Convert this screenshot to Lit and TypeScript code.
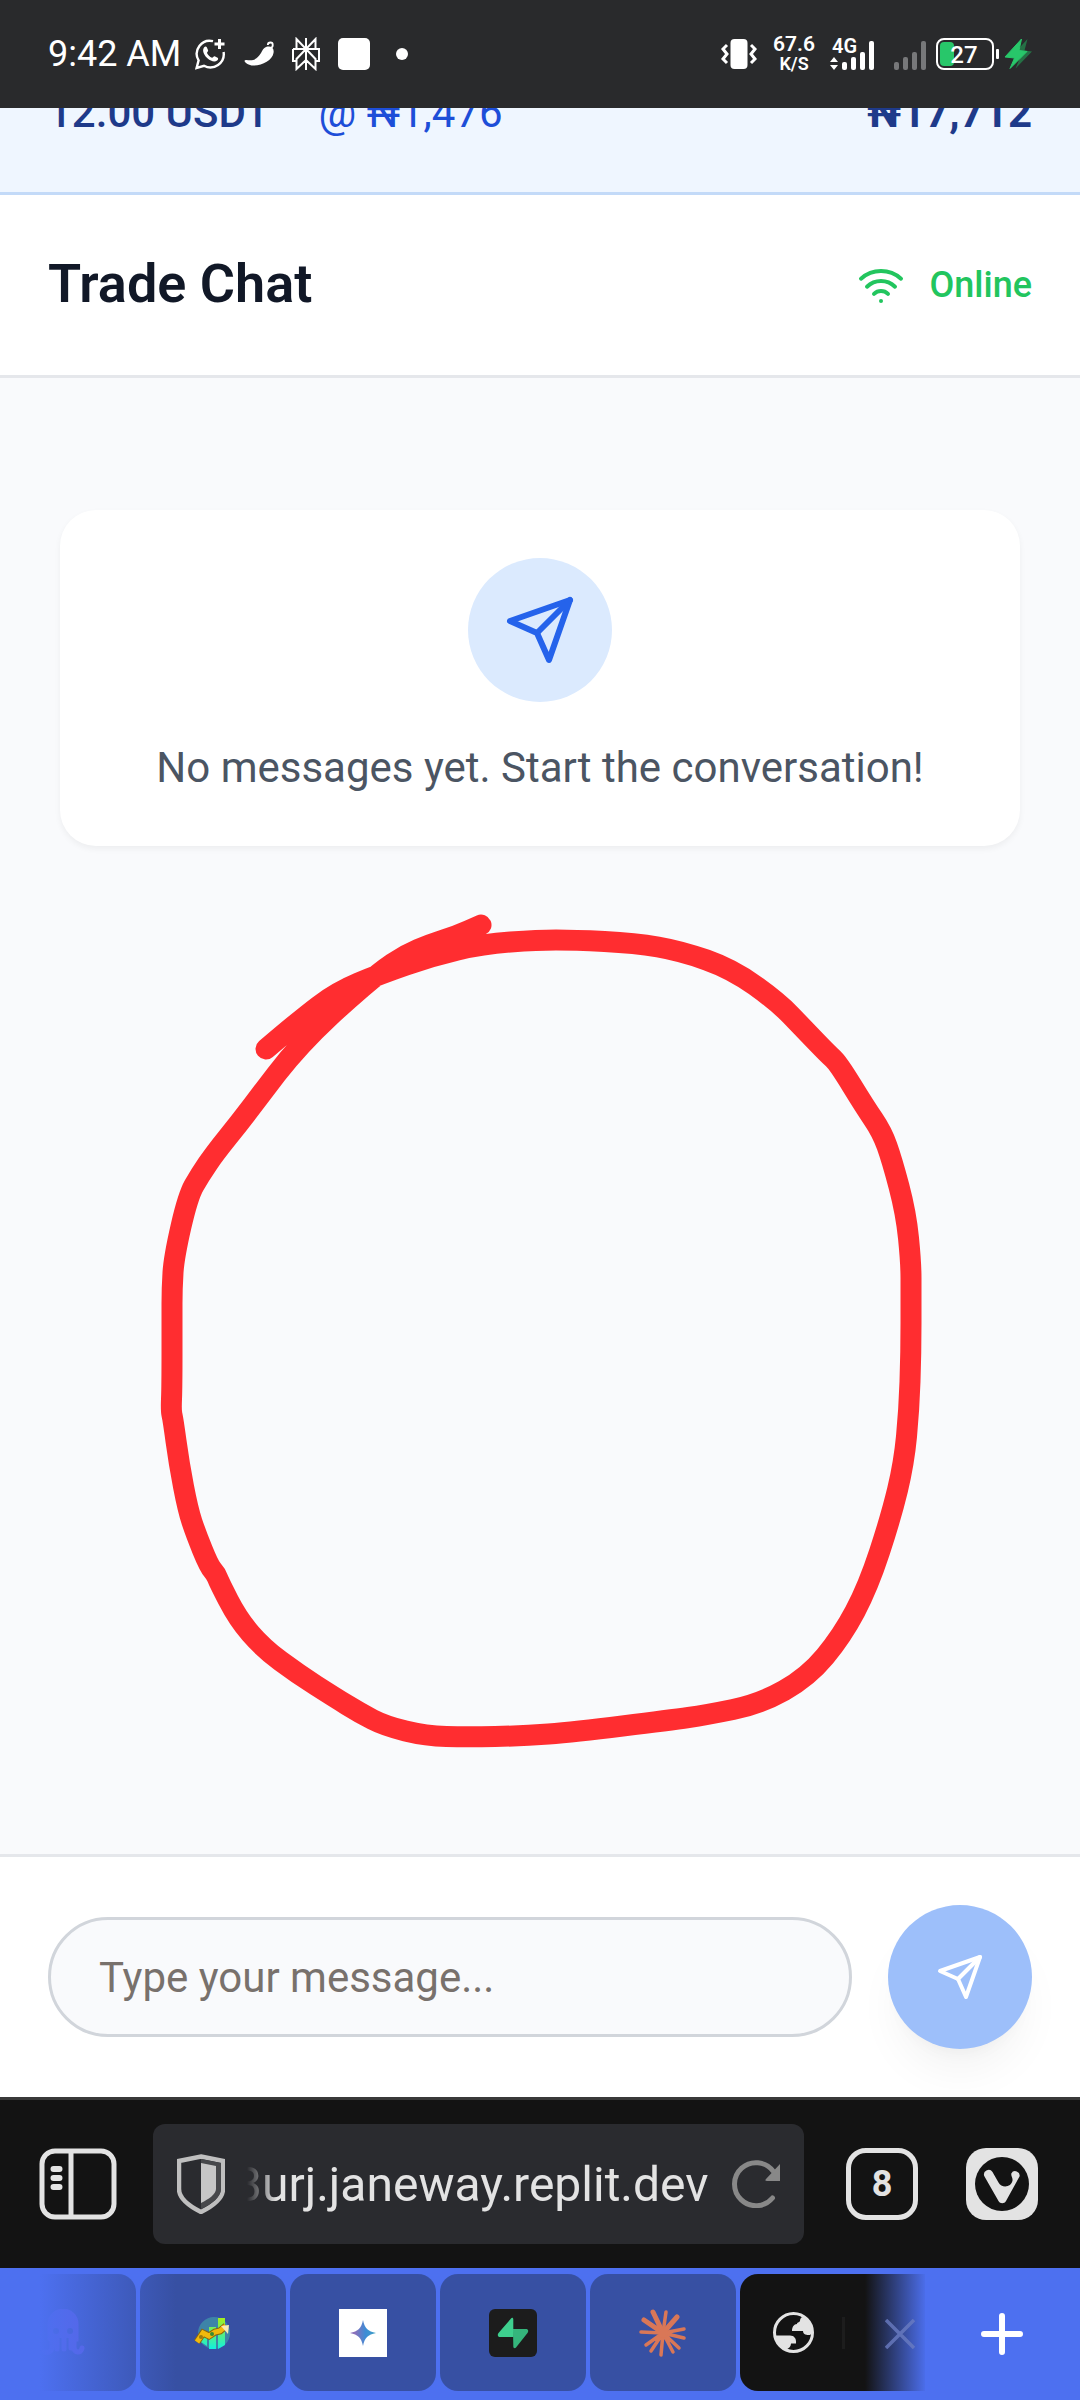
import { LitElement, html, css, svg } from "lit";
import { customElement, state } from "lit/decorators.js";

type Point = [number, number];

const STROKE: Point[] = [
  [266, 1049], [300, 1020], [337, 992], [380, 974], [432, 956], [483, 944], [538, 940], [574, 940],
  [635, 943], [681, 951], [732, 969], [778, 1002], [803, 1028], [828, 1054], [838, 1063], [865, 1107],
  [882, 1132], [892, 1160], [906, 1213], [911, 1263], [911, 1293], [911, 1353], [909, 1410], [904, 1463],
  [891, 1517], [868, 1587], [842, 1636], [808, 1677], [760, 1704], [706, 1715], [671, 1720], [574, 1732],
  [523, 1736], [467, 1737], [426, 1736], [385, 1726], [360, 1713], [334, 1697], [298, 1674], [263, 1648],
  [238, 1619], [219, 1582], [216, 1574], [209, 1566], [196, 1534], [188, 1510], [179, 1463], [173, 1419], [171, 1411],
  [172, 1387], [172, 1320], [172, 1288], [174, 1257], [188, 1196], [200, 1175], [215, 1153], [240, 1122],
  [265, 1089], [288, 1059], [315, 1030], [344, 1003], [380, 972], [405, 955], [431, 944], [456, 936], [481, 925],
];

/** Joins the points with a curve that runs through the middle of each segment. */
function smoothPath(points: Point[]): string {
  const mid = (a: Point, b: Point) => `${(a[0] + b[0]) / 2} ${(a[1] + b[1]) / 2}`;
  let d = `M${points[0].join(" ")}`;
  for (let i = 1; i < points.length - 1; i++) {
    d += `Q${points[i].join(" ")} ${mid(points[i], points[i + 1])}`;
  }
  return d + `L${points[points.length - 1].join(" ")}`;
}

const sendIcon = html`<svg class="icon" viewBox="0 0 24 24" aria-hidden="true">
  <path d="m22 2-7 20-4-9-9-4Z" /><path d="M22 2 11 13" />
</svg>`;

@customElement("status-bar")
export class StatusBar extends LitElement {
  static styles = css`
    :host {
      display: flex;
      align-items: center;
      justify-content: space-between;
      height: 108px;
      padding: 0 48px;
      box-sizing: border-box;
      background: #292a2c;
      color: #fff;
      position: relative;
      z-index: 1;
    }
    .group { display: flex; align-items: center; }
    .icons { gap: 18px; margin-left: 13px; }
    .time { font-size: 36px; line-height: 42px; }
    .speed { display: flex; flex-direction: column; align-items: center; font-size: 21px; line-height: 19px; font-weight: 600; margin: 0 13px 0 15px; }
    .speed .unit { font-size: 18px; }
    .battery { margin-left: 8px; }
    svg { display: block; }
  `;

  render() {
    const bars = (fill: string) => svg`
      <g fill=${fill}>
        <rect x="12" y="26" width="5" height="8" rx="2" />
        <rect x="21" y="21" width="5" height="13" rx="2" />
        <rect x="30" y="16" width="5" height="18" rx="2" />
        <rect x="39" y="5" width="5" height="29" rx="2" />
      </g>`;
    return html`
      <div class="group">
        <span class="time">9:42 AM</span>
        <div class="group icons">
          <svg width="32" height="32" viewBox="0 0 32 32" fill="none" stroke="#fff" stroke-width="2.4">
            <path d="M19 3.2A13 13 0 0 0 4.600 22.400L2.600 30l7.400-2.200A13.400 13.400 0 0 0 29.600 14" />
            <path d="M25.500 1v10M20.500 6h10" stroke-width="3" />
            <path d="M10 9.500c1-1.200 2.300-1.200 2.800-.2l1.300 2.900c.4 1-1.300 2.100-1.100 2.800 1 2.200 2.700 3.800 5 4.700.8.2 1.700-1.800 2.600-1.500l3 1.500c1 .6.4 2.200-.5 2.900-2.600 2-6.600.4-9.400-2-2.600-2.300-6.300-7.300-3.700-11.100Z" fill="#fff" stroke="none" />
          </svg>
          <svg width="30" height="32" viewBox="0 0 30 32">
            <path d="M22 9c5-1.500 8.500 1 7.500 6C28.500 22 18 28 9 27.500 5 27.500 1 25 .5 23c0-1 1-1 2-1 9 1 11-2 14.500-7 1.500-3 2.500-5 5-6Z" fill="#fff" />
            <path d="M26.500 10c3-1 3-5.500 0-5.500-1.700 0-2.700 1-2.700 2.500" fill="none" stroke="#fff" stroke-width="1.800" />
          </svg>
          <svg width="28" height="34" viewBox="0 0 28 34" fill="none" stroke="#fff" stroke-width="2">
            <path d="M14 1v32M14 12 4.500 2v10M14 12l9.500-10v10M1 12h26v12h-3.500M1 12v12h3.500M14 12 4.500 22v10L14 23M14 12l9.500 10v10L14 23" />
          </svg>
          <svg width="32" height="32"><rect width="32" height="32" rx="5" fill="#fff" /></svg>
          <svg width="28" height="32"><circle cx="14" cy="16" r="6" fill="#fff" /></svg>
        </div>
      </div>
      <div class="group">
        <svg width="38" height="32" viewBox="0 0 38 32">
          <rect x="10.500" y="1" width="17" height="30" rx="4" fill="#fff" />
          <path d="M7 7 3 11l4 5-4 5 4 4M31 7l4 4-4 5 4 5-4 4" fill="none" stroke="#fff" stroke-width="3" />
        </svg>
        <div class="speed"><span>67.6</span><span class="unit">K/S</span></div>
        <svg width="48" height="52" viewBox="-2 -8 48 52">
          <text x="2" y="17" font-size="20" font-weight="600" fill="#fff">4G</text>
          <path d="M0 26h8l-4-5ZM0 29h8l-4 5Z" fill="#fff" />
          ${bars("#fff")}
        </svg>
        <svg width="52" height="36" viewBox="-6 0 52 36">${bars("#77787a")}</svg>
        <svg class="battery" width="96" height="34" viewBox="0 0 96 34">
          <rect x="1" y="2" width="56" height="30" rx="7" fill="none" stroke="#fff" stroke-width="2" />
          <rect x="4" y="5" width="14" height="24" rx="4" fill="#28c76a" />
          <rect x="60" y="12" width="3" height="10" rx="1" fill="#fff" />
          <text x="28" y="26" text-anchor="middle" font-size="24" font-weight="500" fill="#fff">27</text>
          <path d="M91.500 2 75 20l9 1-4.500 10.500L96 14.500l-7.500-1Z" fill="#257045" />
          <path d="M85.500 2 69 20l9.500 1-4.500 10.500L91 14.500l-8-1Z" fill="#28c76a" stroke="#28c76a" stroke-linejoin="round" />
        </svg>
      </div>
    `;
  }
}

@customElement("browser-bar")
export class BrowserBar extends LitElement {
  static styles = css`
    :host { display: block; }
    button { border: 0; padding: 0; margin: 0; background: none; font: inherit; color: inherit; display: flex; align-items: center; justify-content: center; flex: none; }
    svg { display: block; }
    .toolbar { display: flex; align-items: center; background: #131313; border-top: 3px solid #393939; height: 168px; padding: 0 42px 0 39px; color: #e3e3e3; }
    .address { flex: 1; min-width: 0; height: 120px; margin: 0 42px 0 36px; padding: 0 24px; box-sizing: border-box; display: flex; align-items: center; background: #2a2b2f; border-radius: 12px; }
    .url {
      flex: 1; min-width: 0; height: 72px; border: 0; padding: 0; margin: 0 16px 0 10px; background: none; color: #e3e3e3; font: inherit; font-size: 48px; outline: 0;
      -webkit-mask-image: linear-gradient(to right, transparent 12px, #000 42px);
      mask-image: linear-gradient(to right, transparent 12px, #000 42px);
    }
    .count { width: 72px; height: 72px; box-sizing: border-box; border: 5px solid #e3e3e3; border-radius: 20px; font-size: 36px; font-weight: 700; }
    .vivaldi { margin-left: 48px; }
    .tabs { display: flex; align-items: center; justify-content: space-between; height: 132px; background: #4d70f0; position: relative; }
    .list { display: flex; gap: 4px; flex: 1; min-width: 0; overflow: hidden; height: 117px; margin-bottom: 3px; }
    .tab { width: 146px; height: 117px; border-radius: 18px; background: #3750a3; }
    .tab:first-child { margin-left: -10px; }
    .active { flex: 1; justify-content: flex-start; gap: 28px; padding-left: 33px; background: #131313; border-radius: 18px 0 0 18px; color: #e3e3e3; }
    .rule { width: 3px; height: 32px; background: #1d1d1d; }
    .fade-left, .fade-right { position: absolute; top: 0; bottom: 0; pointer-events: none; }
    .fade-left { left: 0; width: 176px; background: linear-gradient(to right, #4d70f0 40px, #4d70f000); }
    .fade-right { right: 153px; width: 62px; background: linear-gradient(to right, #4d70f000, #4d70f0); }
    .close { position: absolute; top: 0; bottom: 0; right: 155px; width: 50px; }
    .new { width: 157px; height: 117px; margin-left: -2px; }
  `;

  render() {
    return html`
      <div class="toolbar">
        <button aria-label="Panels">
          <svg width="78" height="72" viewBox="0 0 78 72" fill="none" stroke="#e3e3e3" stroke-width="5">
            <rect x="3" y="3" width="72" height="66" rx="13" />
            <path d="M32 3v66" />
            <path d="M14.500 21h6M14.500 30h6M14.500 39h6" stroke-width="6" stroke-linecap="round" />
          </svg>
        </button>
        <div class="address">
          <button aria-label="Site protection">
            <svg width="48" height="60" viewBox="0 0 48 60">
              <path d="M24 2.500 46 7v28c0 9-10 17-22 23C12 52 2 44 2 35V7Z" fill="none" stroke="#bfbfbf" stroke-width="4.500" />
              <path d="M24 5l20 4v26c0 8-9 15-20 20Z" fill="#47484b" />
              <path d="M24 9l15 3v23c0 5-7 10-15 14Z" fill="#c6c6c6" />
            </svg>
          </button>
          <input class="url" aria-label="Address" .value=${"3urj.janeway.replit.dev"} />
          <button aria-label="Reload">
            <svg width="48" height="48" viewBox="0 0 48 48">
              <path d="M40.500 38A21.500 21.500 0 1 1 41 11" fill="none" stroke="#888" stroke-width="5" stroke-linecap="round" />
              <path d="M48 4v17H35c-2 0-2-1-1-2Z" fill="#888" />
            </svg>
          </button>
        </div>
        <button class="count" aria-label="8 open tabs">8</button>
        <button class="vivaldi" aria-label="Menu">
          <svg width="72" height="72" viewBox="0 0 72 72">
            <rect width="72" height="72" rx="20" fill="#e3e3e3" />
            <circle cx="36" cy="36" r="27" fill="#131313" />
            <path d="M18.500 28.500a4.600 4.600 0 0 1 8-4.500l6 10.500c3 6 13 5 14-2 .4-3-1.600-4-1.200-7a4.400 4.400 0 0 1 8.200 3L40 53c-1.500 3-6 3-7.500 0Z" fill="#e3e3e3" />
          </svg>
        </button>
      </div>
      <div class="tabs">
        <div class="list">
          <button class="tab" aria-label="Tab 1">
            <svg width="48" height="48" viewBox="0 0 48 48">
              <path d="M11 30V15a13 13 0 0 1 26 0v15h-5v9M18 40V28M25 40V28M13 30v8c0 5-4 6-8 5M35 30v8c0 6 7 7 8 1" fill="none" stroke="#6455d8" stroke-width="5" stroke-linecap="round" />
              <path d="M11 15a13 13 0 0 1 26 0v14H11Z" fill="#6455d8" />
              <circle cx="17" cy="22" r="3" fill="#3750a3" /><circle cx="31" cy="22" r="3" fill="#3750a3" />
            </svg>
          </button>
          <button class="tab" aria-label="Tab 2">
            <svg width="40" height="36" viewBox="0 0 40 36">
              <defs><linearGradient id="bar" x1="0" y1="0" x2="0" y2="1"><stop offset="0" stop-color="#a5f01c" /><stop offset="1" stop-color="#10f0e0" /></linearGradient></defs>
              <circle cx="21" cy="18" r="16" fill="#3d84a8" />
              <path d="M8 16h6v15l-6-4ZM16 12h7v22h-7ZM25 3h7v27l-7 4Z" fill="url(#bar)" />
              <path d="M4 27l6-9 6 3 6-4 5-1 6-5" fill="none" stroke="#8a6510" stroke-width="7" />
              <path d="M4 27l6-9 6 3 6-4 5-1 6-5" fill="none" stroke="#f2b90c" stroke-width="5" />
              <path d="m28 11 8-1-1 9Z" fill="#f7e9b5" />
              <circle cx="8" cy="22" r="2" fill="#9a7a10" /><circle cx="19" cy="19" r="2" fill="#3c8a30" />
            </svg>
          </button>
          <button class="tab" aria-label="Tab 3">
            <svg width="48" height="48" viewBox="0 0 48 48">
              <defs><linearGradient id="spark" x1="0" y1="0" x2="1" y2="0"><stop offset=".2" stop-color="#8a70bb" /><stop offset=".6" stop-color="#3c8cd6" /><stop offset="1" stop-color="#3fa0c4" /></linearGradient></defs>
              <rect width="48" height="48" fill="#fff" />
              <path d="M24 11c1.500 8 5 11.500 13 13-8 1.500-11.500 5-13 13-1.500-8-5-11.500-13-13 8-1.500 11.500-5 13-13Z" fill="url(#spark)" />
            </svg>
          </button>
          <button class="tab" aria-label="Tab 4">
            <svg width="48" height="48" viewBox="0 0 48 48">
              <rect width="48" height="48" rx="6" fill="#1c1c1c" />
              <path d="M24 20h13c2 0 3 2 1.500 4L27 38.500c-1 1.200-2.700.6-2.700-1Z" fill="#35b57c" />
              <path d="M24.300 28H11c-2 0-3-2-1.500-4L22 9.500c1-1.200 2.300-.6 2.300 1Z" fill="#3ecf8e" />
            </svg>
          </button>
          <button class="tab" aria-label="Tab 5">
            <svg width="48" height="48" viewBox="0 0 48 48" stroke="#d97757" stroke-width="3.500" stroke-linecap="round">
              <path d="M24 24 14 3M24 24 27 3M24 24 38 8M24 24 45 20M24 24 45 29M24 24 40 39M24 24 34 43M24 24 22 46M24 24 12 42M24 24 7 36M24 24 2 23M24 24 5 11" />
              <path d="M24 24 14 3M24 24 38 8M24 24 5 11" stroke-width="5" />
              <circle cx="24" cy="24" r="5" fill="#d97757" stroke="none" />
            </svg>
          </button>
          <button class="tab active" aria-label="Current tab">
            <svg width="41" height="41" viewBox="0 0 41 41">
              <circle cx="20.500" cy="20.500" r="19" fill="none" stroke="#e3e3e3" stroke-width="3" />
              <path d="M30 5c-2 0-3 2-3 4-1 2-3 1-3 3-3 0-5 3-5 7h11c0 4 4 4 7 4l2-2c0-8-4-13-9-16ZM2 23.500h15c4 0 6 3 6 6v2h-5c0 3-2 5-5 6C7 35 3 30 2 23.500Z" fill="#e3e3e3" />
            </svg>
            <span class="rule"></span>
          </button>
        </div>
        <div class="fade-left"></div>
        <div class="fade-right"></div>
        <button class="close" aria-label="Close tab">
          <svg width="30" height="30" viewBox="0 0 30 30"><path d="M1 1l28 28M29 1 1 29" stroke="#6a7cc0" stroke-opacity=".8" stroke-width="3.500" /></svg>
        </button>
        <button class="new" aria-label="New tab">
          <svg width="42" height="42" viewBox="0 0 42 42"><path d="M21 3v36M3 21h36" stroke="#fff" stroke-width="6" stroke-linecap="round" /></svg>
        </button>
      </div>
    `;
  }
}

@customElement("app-root")
export class AppRoot extends LitElement {
  static styles = css`
    :host { display: flex; flex-direction: column; min-height: 100vh; overflow: hidden; background: #f9fafc; font-family: Roboto, "Liberation Sans", sans-serif; }
    .summary { display: flex; align-items: flex-end; justify-content: space-between; height: 87px; box-sizing: border-box; padding: 0 48px 48px; background: #eff6ff; border-bottom: 3px solid #c3daf8; font-size: 42px; line-height: 62px; color: #1e3a8a; font-weight: 500; }
    .amounts { display: flex; gap: 48px; }
    .rate { color: #1d4ed8; font-weight: 400; }
    .total { font-weight: 700; }
    .header { display: flex; align-items: center; justify-content: space-between; height: 183px; box-sizing: border-box; padding: 0 48px; background: #fff; border-bottom: 3px solid #e5e7eb; }
    h1 { margin: 0; padding-bottom: 2px; font-size: 54px; line-height: 84px; font-weight: 600; color: #111827; }
    .online { display: flex; align-items: center; gap: 24px; color: #22c55e; font-size: 36px; line-height: 48px; font-weight: 500; }
    .icon { display: block; width: 48px; height: 48px; fill: none; stroke: currentColor; stroke-width: 2; stroke-linecap: round; stroke-linejoin: round; }
    .chat { flex: 1; position: relative; padding: 132px 60px; }
    .empty { display: flex; flex-direction: column; align-items: center; gap: 36px; padding: 48px; background: #fff; border-radius: 36px; box-shadow: 0 3px 6px rgba(0, 0, 0, 0.05); }
    .badge { display: grid; place-items: center; width: 144px; height: 144px; border-radius: 50%; background: #dbeafe; color: #2563eb; }
    .badge .icon { width: 72px; height: 72px; }
    .empty p { margin: 0; font-size: 42px; line-height: 60px; color: #4b5563; text-align: center; }
    .mark { position: absolute; top: 0; left: 0; width: 100%; pointer-events: none; }
    .composer { display: flex; align-items: center; gap: 36px; padding: 48px; background: #fff; border-top: 3px solid #e5e7eb; }
    .message { flex: 1; min-width: 0; height: 120px; box-sizing: border-box; padding: 0 48px; border: 3px solid #d1d5db; border-radius: 60px; background: #f9fafc; font: inherit; font-size: 42px; color: #111827; outline: 0; }
    .message::placeholder { color: #78716c; opacity: 1; }
    .send { flex: none; display: grid; place-items: center; width: 144px; height: 144px; padding: 0; border: 0; border-radius: 50%; background: #9dbffa; color: #fff; box-shadow: 0 30px 45px -9px rgba(0, 0, 0, 0.05), 0 12px 18px -12px rgba(0, 0, 0, 0.05); }
  `;

  @state() private draft = "";

  render() {
    return html`
      <status-bar></status-bar>
      <section class="summary">
        <div class="amounts"><span>12.00 USDT</span><span class="rate">@ ₦1,476</span></div>
        <span class="total">₦17,712</span>
      </section>
      <header class="header">
        <h1>Trade Chat</h1>
        <div class="online">
          <svg class="icon" viewBox="0 0 24 24" aria-hidden="true">
            <path d="M12 20h.01M2 8.820a15 15 0 0 1 20 0M5 12.859a10 10 0 0 1 14 0M8.500 16.429a5 5 0 0 1 7 0" />
          </svg>
          <span>Online</span>
        </div>
      </header>
      <main class="chat">
        <div class="empty">
          <div class="badge">${sendIcon}</div>
          <p>No messages yet. Start the conversation!</p>
        </div>
        <svg class="mark" viewBox="0 378 1080 1476" aria-hidden="true">
          <path d=${smoothPath(STROKE)} fill="none" stroke="#ff2d30" stroke-width="21" stroke-linecap="round" stroke-linejoin="round" />
        </svg>
      </main>
      <form class="composer" @submit=${(e: Event) => e.preventDefault()}>
        <input class="message" aria-label="Message" placeholder="Type your message..." .value=${this.draft}
          @input=${(e: InputEvent) => { this.draft = (e.target as HTMLInputElement).value; }} />
        <button class="send" aria-label="Send">${sendIcon}</button>
      </form>
      <browser-bar></browser-bar>
    `;
  }
}
